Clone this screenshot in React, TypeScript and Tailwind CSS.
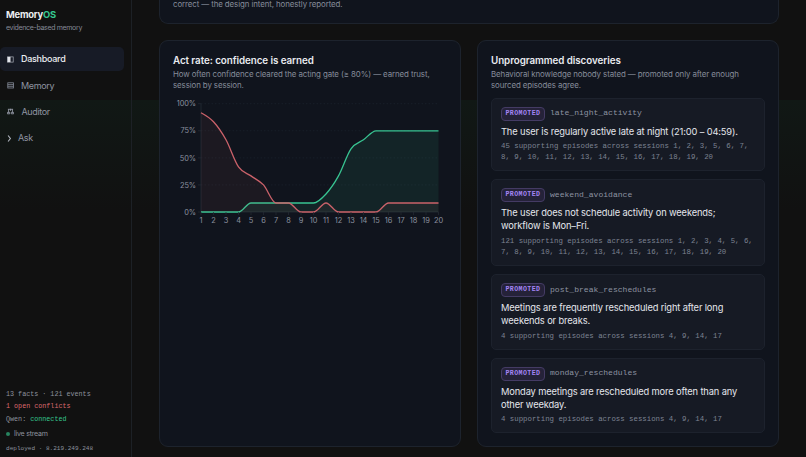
import type { ReactNode } from "react";
import clsx from "clsx";

type Discovery = {
  name: string;
  lines: string[];
  evidence: string[];
  height: string;
};

const discoveries: Discovery[] = [
  {
    name: "late_night_activity",
    lines: ["The user is regularly active late at night (21:00 – 04:59)."],
    evidence: [
      "45 supporting episodes across sessions 1, 2, 3, 5, 6, 7,",
      "8, 9, 10, 11, 12, 13, 14, 15, 16, 17, 18, 19, 20",
    ],
    height: "h-[73.5px]",
  },
  {
    name: "weekend_avoidance",
    lines: ["The user does not schedule activity on weekends;", "workflow is Mon–Fri."],
    evidence: [
      "121 supporting episodes across sessions 1, 2, 3, 4, 5, 6,",
      "7, 8, 9, 10, 11, 12, 13, 14, 15, 16, 17, 18, 19, 20",
    ],
    height: "h-[87px]",
  },
  {
    name: "post_break_reschedules",
    lines: ["Meetings are frequently rescheduled right after long", "weekends or breaks."],
    evidence: ["4 supporting episodes across sessions 4, 9, 14, 17"],
    height: "h-[75.5px]",
  },
  {
    name: "monday_reschedules",
    lines: ["Monday meetings are rescheduled more often than any", "other weekday."],
    evidence: ["4 supporting episodes across sessions 4, 9, 14, 17"],
    height: "h-[75.5px]",
  },
];

const actRate = [0, 0, 0, 0, 1, 1, 1, 1, 1, 1, 2, 4, 7, 8, 9, 9, 9, 9, 9, 9].map((n) => n / 12);
const askRate = [11, 10, 8, 5, 4, 3, 1, 1, 0, 0, 1, 0, 0, 0, 0, 1, 1, 1, 1, 1].map((n) => n / 12);

const LEFT = 28;
const TOP = 5.7;
const STEP = 12.5;
const PLOT_H = 108.3;
const BOTTOM = TOP + PLOT_H;
const RIGHT = LEFT + STEP * 19;

// Monotone cubic interpolation, evenly spaced points
const curve = (values: number[]) => {
  const ys = values.map((v) => BOTTOM - v * PLOT_H);
  const slopes = ys.slice(1).map((y, i) => (y - ys[i]) / STEP);
  const tangents = ys.map((_, i) => {
    if (i === 0) return slopes[0] * 0.75;
    if (i === ys.length - 1) return slopes[i - 1];
    const a = slopes[i - 1];
    const b = slopes[i];
    if (a * b <= 0) return 0;
    return Math.sign(a) * Math.min(Math.abs(a) * 2, Math.abs(b) * 2, Math.abs(a + b) / 2);
  });
  let d = `M${LEFT},${ys[0]}`;
  for (let i = 1; i < ys.length; i++) {
    const x0 = LEFT + (i - 1) * STEP;
    const x1 = x0 + STEP;
    const k = STEP / 3;
    d += `C${x0 + k},${ys[i - 1] + tangents[i - 1] * k} ${x1 - k},${ys[i] - tangents[i] * k} ${x1},${ys[i]}`;
  }
  return d;
};

const Area = ({ values, color, opacity }: { values: number[]; color: string; opacity: number }) => {
  const d = curve(values);
  return (
    <>
      <path d={`${d}L${RIGHT},${BOTTOM}L${LEFT},${BOTTOM}Z`} fill={color} fillOpacity={opacity} />
      <path d={d} fill="none" stroke={color} strokeWidth="1.3" />
    </>
  );
};

const ActRateChart = () => (
  <svg width="276" height="130" className="block font-['Inter',sans-serif]">
    {[0, 0.25, 0.5, 0.75, 1].map((v) => {
      const y = BOTTOM - v * PLOT_H;
      return (
        <g key={v}>
          {v > 0 && <line x1={LEFT} x2={RIGHT} y1={y} y2={y} stroke="#1b222c" strokeWidth="0.8" strokeDasharray="1.5 2" />}
          <line x1={LEFT - 3} x2={LEFT} y1={y} y2={y} stroke="#252b35" strokeWidth="0.7" />
          <text x={LEFT - 5} y={y + 2.7} textAnchor="end" fontSize="7.4" letterSpacing="-0.1" fill="#8b919f">
            {v * 100}%
          </text>
        </g>
      );
    })}
    <line x1={LEFT} x2={LEFT} y1={TOP} y2={BOTTOM} stroke="#252b35" strokeWidth="0.8" />
    <line x1={LEFT} x2={RIGHT} y1={BOTTOM} y2={BOTTOM} stroke="#252b35" strokeWidth="0.8" />
    <Area values={actRate} color="#38c492" opacity={0.09} />
    <Area values={askRate} color="#cb626a" opacity={0.07} />
    {actRate.map((_, i) => {
      const x = LEFT + i * STEP;
      return (
        <g key={i}>
          <line x1={x} x2={x} y1={BOTTOM} y2={BOTTOM + 3} stroke="#252b35" strokeWidth="0.7" />
          <text x={x} y={BOTTOM + 10.6} textAnchor="middle" fontSize="7.4" letterSpacing="-0.1" fill="#8b919f">
            {i + 1}
          </text>
        </g>
      );
    })}
  </svg>
);

const navItems: { label: string; icon: ReactNode; active?: boolean; gap: string }[] = [
  {
    label: "Dashboard",
    active: true,
    gap: "gap-[7px]",
    icon: (
      <svg width="7" height="7" viewBox="0 0 7 7">
        <rect x="0.6" y="0.9" width="5.6" height="5.2" fill="none" stroke="#a9adb8" strokeWidth="0.7" />
        <rect x="0.6" y="0.9" width="2.9" height="5.2" fill="#e2e4ea" />
      </svg>
    ),
  },
  {
    label: "Memory",
    gap: "gap-[7px]",
    icon: (
      <svg width="7" height="7" viewBox="0 0 7 7" fill="none" stroke="#858b99" strokeWidth="0.8">
        <rect x="0.8" y="0.8" width="5.6" height="5.2" />
        <path d="M0.8 2.6h5.6M0.8 4.3h5.6" />
      </svg>
    ),
  },
  {
    label: "Auditor",
    gap: "gap-[7.5px]",
    icon: (
      <svg width="7" height="7" viewBox="0 0 7 7" fill="none" stroke="#969ba8" strokeWidth="0.9">
        <path d="M0.9 1.3h5.2M1.6 1.3v3M5.4 1.3v3M3.5 0.8v2" />
        <path d="M0.4 4.4h2.3v1.4h-2.3zM4.3 4.4h2.3v1.4h-2.3z" />
      </svg>
    ),
  },
  {
    label: "Ask",
    gap: "gap-[6px]",
    icon: (
      <svg width="5" height="7" viewBox="0 0 5 7" fill="none" stroke="#b2b6c0" strokeWidth="1.1">
        <path d="M1.1 0.5L3.4 3.5L1.1 6.5" />
      </svg>
    ),
  },
];

const Sidebar = () => (
  <aside className="flex h-full w-[132px] shrink-0 flex-col border-r border-[#1d2126]">
    <div className="pt-[8px] pl-[6px]">
      <h1 className="text-[9.4px] leading-[14px] font-bold tracking-[-0.22px] text-[#eceef2]">
        Memory<span className="text-[#35c78f]">OS</span>
      </h1>
      <p className="mt-[-1px] text-[7px] leading-[13px] tracking-[-0.33px] text-[#858a96]">evidence-based memory</p>
    </div>
    <nav className="mt-[13px] flex flex-col gap-[2.4px]">
      {navItems.map((item) => (
        <a
          key={item.label}
          className={clsx(
            "flex h-[24px] w-[123.5px] items-center rounded-[5px] pl-[7px] text-[9px]",
            item.gap,
            item.active
              ? "bg-[#171b26] font-medium tracking-[-0.28px] text-[#eceef2]"
              : "tracking-[-0.35px] text-[#8f94a1]"
          )}
        >
          {item.icon}
          {item.label}
        </a>
      ))}
    </nav>
    <div className="mt-auto flex flex-col pb-[2px] pl-[6px] font-['Liberation_Mono',monospace] text-[6.72px] leading-[12.5px] whitespace-pre text-[#8d929e]">
      <p>13 facts · 121 events</p>
      <p className="text-[#dc696e]">1 open conflicts</p>
      <p>
        Qwen: <span className="text-[#35c78f]">connected</span>
      </p>
      <p className="mt-[3px] flex items-center gap-[4px] font-['Inter',sans-serif] text-[7.1px] tracking-[-0.25px]">
        <span className="size-[4px] rounded-full bg-[#27845f]" />
        live stream
      </p>
      <p className="mt-[2px] text-[6.05px]">deployed · 8.219.249.248</p>
    </div>
  </aside>
);

const Card = ({ title, lines, children }: { title: string; lines: string[]; children: ReactNode }) => (
  <section className="h-[407.5px] w-[302px] shrink-0 rounded-[9px] border border-[#1d232d] bg-[#10141d] px-[13px] pt-[13.5px]">
    <h2 className="text-[9.8px] leading-[14px] font-semibold tracking-[-0.06px] whitespace-nowrap text-[#e9ebf0]">{title}</h2>
    <div className="mt-[0.5px] text-[7.9px] leading-[11px] tracking-[-0.1px] whitespace-nowrap text-[#868c9a]">
      {lines.map((line) => (
        <p key={line}>{line}</p>
      ))}
    </div>
    {children}
  </section>
);

const DiscoveryItem = ({ item }: { item: Discovery }) => (
  <li className={clsx("rounded-[5px] border border-[#1d222d] bg-[#161a24] px-[9px] pt-[8px] whitespace-nowrap", item.height)}>
    <div className="flex h-[14px] items-center gap-[5px] font-['Liberation_Mono',monospace]">
      <span className="flex h-[14px] w-[44px] items-center justify-center rounded-[4px] border border-[#443b64] bg-[#252239] text-[6.6px] font-bold tracking-[0.42px] text-[#a385f4]">
        PROMOTED
      </span>
      <span className="text-[8.07px] text-[#8d93a1]">{item.name}</span>
    </div>
    <div className="mt-[4px] text-[9.3px] leading-[13.4px] tracking-[-0.13px] text-[#e4e6ec]">
      {item.lines.map((line) => (
        <p key={line}>{line}</p>
      ))}
    </div>
    <div className="mt-[3px] font-['Liberation_Mono',monospace] text-[7.36px] leading-[11px] text-[#7d8392]">
      {item.evidence.map((line) => (
        <p key={line}>{line}</p>
      ))}
    </div>
  </li>
);

export default function App() {
  return (
    <div className="flex h-[457px] w-[806px] overflow-hidden bg-[#111111] bg-[linear-gradient(to_bottom,transparent_100px,#111815_100px,#111111_210px)] font-['Inter',sans-serif]">
      <Sidebar />
      <main className="flex flex-col gap-[16px] pl-[27px]">
        <section className="h-[23.5px] w-[620px] shrink-0 rounded-b-[9px] border border-t-0 border-[#1d232d] bg-[#10141d] pl-[13px]">
          <p className="mt-[-2px] text-[7.9px] leading-[12px] tracking-[-0.1px] text-[#868c9a]">
            correct — the design intent, honestly reported.
          </p>
        </section>
        <div className="flex gap-[16px]">
          <Card
            title="Act rate: confidence is earned"
            lines={["How often confidence cleared the acting gate (≥ 80%) — earned trust,", "session by session."]}
          >
            <div className="mt-[7px]">
              <ActRateChart />
            </div>
          </Card>
          <Card
            title="Unprogrammed discoveries"
            lines={["Behavioral knowledge nobody stated — promoted only after enough", "sourced episodes agree."]}
          >
            <ul className="mt-[7px] flex flex-col gap-[8px]">
              {discoveries.map((item) => (
                <DiscoveryItem key={item.name} item={item} />
              ))}
            </ul>
          </Card>
        </div>
      </main>
    </div>
  );
}
